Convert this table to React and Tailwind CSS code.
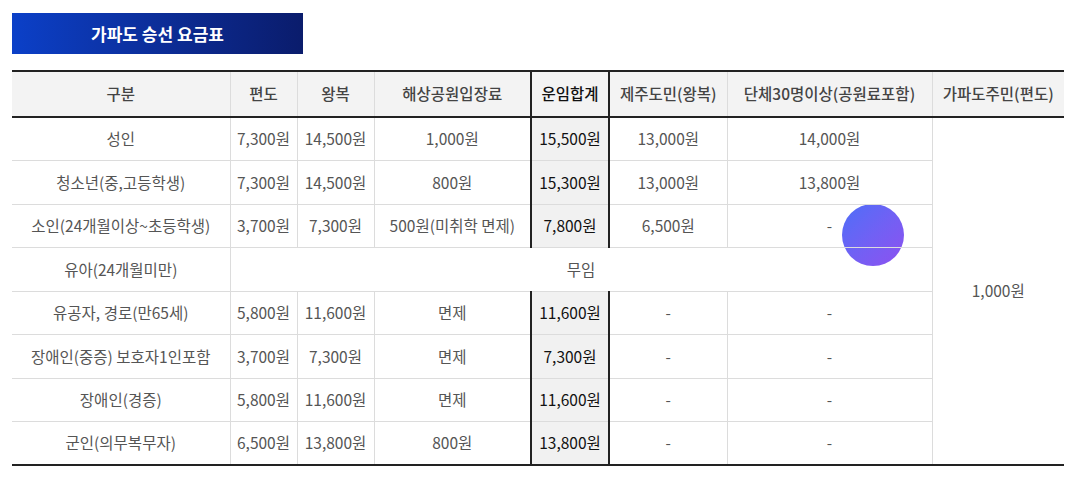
const rows = [
  ["성인", "7,300원", "14,500원", "1,000원", "15,500원", "13,000원", "14,000원"],
  ["청소년(중,고등학생)", "7,300원", "14,500원", "800원", "15,300원", "13,000원", "13,800원"],
  ["소인(24개월이상~초등학생)", "3,700원", "7,300원", "500원(미취학 면제)", "7,800원", "6,500원", "-"],
  null,
  ["유공자, 경로(만65세)", "5,800원", "11,600원", "면제", "11,600원", "-", "-"],
  ["장애인(중증) 보호자1인포함", "3,700원", "7,300원", "면제", "7,300원", "-", "-"],
  ["장애인(경증)", "5,800원", "11,600원", "면제", "11,600원", "-", "-"],
  ["군인(의무복무자)", "6,500원", "13,800원", "800원", "13,800원", "-", "-"],
];

const heads = ["구분", "편도", "왕복", "해상공원입장료", "운임합계", "제주도민(왕복)", "단체30명이상(공원료포함)", "가파도주민(편도)"];
const widths = ["w-[218px]", "w-[67px]", "w-[77px]", "w-[157px]", "w-[78px]", "w-[118px]", "w-[205px]", "w-[132px]"];

export default function App() {
  return (
    <div className="relative isolate w-[1080px] h-[480px] bg-white font-['Noto_Sans_CJK_KR','Noto_Sans',sans-serif]">
      <div className="absolute left-[842px] top-[204px] w-[62px] h-[62px] rounded-full bg-gradient-to-br from-[#4a6ef8] to-[#8c50f0] -z-10" />
      <div className="pt-[13px] px-3">
        <div className="w-[291px] h-[41px] flex items-center justify-center bg-gradient-to-r from-[#0b40c8] to-[#0a1c6c] text-white text-[17px] font-bold">
          가파도 승선 요금표
        </div>
        <table className="mt-4 w-[1052px] table-fixed border-collapse text-[15.5px] text-[#555]">
          <thead>
            <tr className="h-[46px] bg-[#f3f3f3] border-t-2 border-b-2 border-[#222]">
              {heads.map((h, i) => (
                <th
                  key={h}
                  className={`${widths[i]} font-medium ${
                    i === 4
                      ? "border-x-2 border-x-[#222] text-[#111] font-bold"
                      : i < 7
                      ? "border-r border-r-[#dcdcdc] text-[#444]"
                      : "text-[#444]"
                  }`}
                >
                  {h}
                </th>
              ))}
            </tr>
          </thead>
          <tbody className="border-b-2 border-[#222]">
            {rows.map((r, ri) =>
              r === null ? (
                <tr key={ri} className="h-[43.5px] border-b border-[#dcdcdc]">
                  <td className="text-center border-r border-[#dcdcdc]">유아(24개월미만)</td>
                  <td colSpan={6} className="text-center border-r border-[#dcdcdc]">무임</td>
                </tr>
              ) : (
                <tr key={ri} className={`h-[43.5px] ${ri < 7 ? "border-b border-[#dcdcdc]" : ""}`}>
                  {r.map((c, ci) => (
                    <td
                      key={ci}
                      className={`text-center ${
                        ci === 4
                          ? "bg-[#f1f1f1] border-x-2 border-x-[#222] text-[#111]"
                          : "border-r border-r-[#dcdcdc]"
                      }`}
                    >
                      {c}
                    </td>
                  ))}
                  {ri === 0 && (
                    <td rowSpan={8} className="text-center align-middle">
                      1,000원
                    </td>
                  )}
                </tr>
              )
            )}
          </tbody>
        </table>
      </div>
    </div>
  );
}
